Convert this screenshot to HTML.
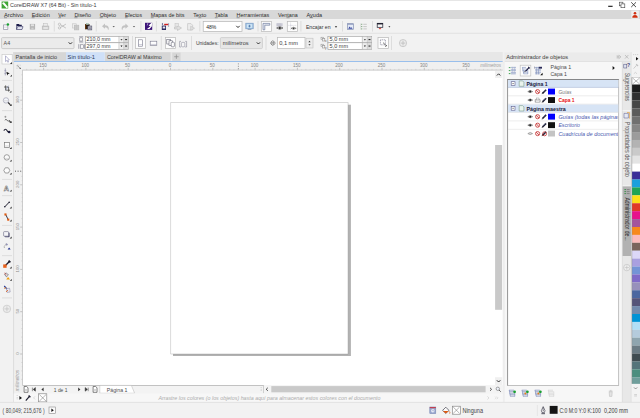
<!DOCTYPE html>
<html lang="es">
<head>
<meta charset="utf-8">
<title>CorelDRAW X7 (64 Bit) - Sin título-1</title>
<style>
html,body{margin:0;padding:0;background:#f0f0f0;overflow:hidden;}
body{width:640px;height:418px;position:relative;}
svg{position:absolute;left:0;top:0;display:block;font-family:"Liberation Sans",sans-serif;}
text{white-space:pre;}
</style>
</head>
<body>
<svg width="640" height="418" viewBox="0 0 640 418">
<g id="backgrounds" >
<rect x="0" y="0" width="640" height="418" fill="#f2f2f2" />
<rect x="0" y="0" width="640" height="10" fill="#ffffff" />
<rect x="0" y="0" width="640" height="0.7" fill="#dcdcdc" />
<rect x="0" y="10" width="640" height="9" fill="#d8d8d8" />
<line x1="0" y1="33.3" x2="640" y2="33.3" stroke="#dedede" stroke-width="0.8" />
</g>
<g id="titlebar" >
<rect x="1.6" y="1.5" width="6.6" height="7" fill="#3fa535" />
<path d="M2.3 2.2 L4 2.2 L7.6 6.6 L7.6 7.9 L6.4 7.9 L2.3 3.6 Z" fill="#ffffff" />
<path d="M2.3 2.2 L3.3 2.2 L2.3 3.2 Z" fill="#2a7a24" />
<text x="10" y="7.4" font-size="6.1" fill="#3a3a3a" textLength="86.5" lengthAdjust="spacingAndGlyphs" >CorelDRAW X7 (64 Bit) - Sin título-1</text>
<line x1="608.2" y1="6.3" x2="612.6" y2="6.3" stroke="#111" stroke-width="1.1" />
<rect x="619.3" y="2.2" width="3.6" height="3.6" fill="none" stroke="#444" stroke-width="0.6" />
<rect x="621" y="3.9" width="3.8" height="3.8" fill="#fff" stroke="#444" stroke-width="0.6" />
<path d="M631.2 2.3 L636 7.1 M636 2.3 L631.2 7.1" fill="none" stroke="#222" stroke-width="0.8" />
</g>
<g id="menubar" >
<text x="4" y="16.6" font-size="6.2" fill="#2c2c2c" textLength="19.1" lengthAdjust="spacingAndGlyphs" >Archivo</text>
<line x1="4" y1="17.7" x2="7.00143" y2="17.7" stroke="#555" stroke-width="0.5" />
<text x="31.7" y="16.6" font-size="6.2" fill="#2c2c2c" textLength="18" lengthAdjust="spacingAndGlyphs" >Edición</text>
<line x1="31.7" y1="17.7" x2="34.5286" y2="17.7" stroke="#555" stroke-width="0.5" />
<text x="58.3" y="16.6" font-size="6.2" fill="#2c2c2c" textLength="7.5" lengthAdjust="spacingAndGlyphs" >Ver</text>
<line x1="58.3" y1="17.7" x2="61.05" y2="17.7" stroke="#555" stroke-width="0.5" />
<text x="74.4" y="16.6" font-size="6.2" fill="#2c2c2c" textLength="16.6" lengthAdjust="spacingAndGlyphs" >Diseño</text>
<line x1="74.4" y1="17.7" x2="77.4433" y2="17.7" stroke="#555" stroke-width="0.5" />
<text x="99.7" y="16.6" font-size="6.2" fill="#2c2c2c" textLength="16.3" lengthAdjust="spacingAndGlyphs" >Objeto</text>
<line x1="99.7" y1="17.7" x2="102.688" y2="17.7" stroke="#555" stroke-width="0.5" />
<text x="124.9" y="16.6" font-size="6.2" fill="#2c2c2c" textLength="17.1" lengthAdjust="spacingAndGlyphs" >Efectos</text>
<line x1="124.9" y1="17.7" x2="127.587" y2="17.7" stroke="#555" stroke-width="0.5" />
<text x="150.8" y="16.6" font-size="6.2" fill="#2c2c2c" textLength="33.6" lengthAdjust="spacingAndGlyphs" >Mapas de bits</text>
<line x1="150.8" y1="17.7" x2="153.643" y2="17.7" stroke="#555" stroke-width="0.5" />
<text x="193.2" y="16.6" font-size="6.2" fill="#2c2c2c" textLength="13" lengthAdjust="spacingAndGlyphs" >Texto</text>
<line x1="198.4" y1="17.7" x2="201.26" y2="17.7" stroke="#555" stroke-width="0.5" />
<text x="214.8" y="16.6" font-size="6.2" fill="#2c2c2c" textLength="13" lengthAdjust="spacingAndGlyphs" >Tabla</text>
<line x1="214.8" y1="17.7" x2="217.66" y2="17.7" stroke="#555" stroke-width="0.5" />
<text x="236.6" y="16.6" font-size="6.2" fill="#2c2c2c" textLength="32.7" lengthAdjust="spacingAndGlyphs" >Herramientas</text>
<line x1="236.6" y1="17.7" x2="239.597" y2="17.7" stroke="#555" stroke-width="0.5" />
<text x="278.1" y="16.6" font-size="6.2" fill="#2c2c2c" textLength="19.6" lengthAdjust="spacingAndGlyphs" >Ventana</text>
<line x1="286.5" y1="17.7" x2="289.58" y2="17.7" stroke="#555" stroke-width="0.5" />
<text x="306.5" y="16.6" font-size="6.2" fill="#2c2c2c" textLength="15.5" lengthAdjust="spacingAndGlyphs" >Ayuda</text>
<line x1="309.6" y1="17.7" x2="313.01" y2="17.7" stroke="#555" stroke-width="0.5" />
<rect x="631.3" y="10.6" width="7.5" height="8" fill="#efefef" />
<circle cx="635" cy="13.2" r="1.3" fill="#d03010" />
<path d="M632.3 17.8 Q632.3 15 635 15 Q637.7 15 637.7 17.8 Z" fill="#d03010" />
</g>
<g id="toolbar" >
<path d="M3.5 24.8 L6.4 24.8 L7.8 26.2 L7.8 29.5 L3.5 29.5 Z" fill="#fbfbfb" stroke="#7c7c94" stroke-width="0.6" />
<path d="M3.8 27.2 H7.6" fill="none" stroke="#b8b8c8" stroke-width="0.5" />
<circle cx="7.9" cy="24.4" r="1.25" fill="#18a030" />
<path d="M16.4 24 L19 24 L19.6 24.7 L21.8 24.7 L21.8 26 L16.4 26 Z" fill="#1a1a48" />
<path d="M16.5 25.8 V29.5 H22 L23 26.6 H17.6 L16.6 29.3" fill="#e4e6f2" stroke="#2c2c5c" stroke-width="0.6" />
<rect x="29.8" y="23.9" width="5.3" height="5.7" fill="#b6b6b6" />
<rect x="30.9" y="24.3" width="3.1" height="1.9" fill="#e2e2e2" />
<rect x="31.3" y="27.6" width="2.3" height="2" fill="#d0d0d0" />
<rect x="42.2" y="26" width="6.7" height="3.6" fill="#cdcdcd" stroke="#b4b4b4" stroke-width="0.5" />
<rect x="43.7" y="23.6" width="3.7" height="2.4" fill="#ececec" stroke="#bcbcbc" stroke-width="0.5" />
<rect x="43.4" y="27.4" width="4.4" height="1.2" fill="#f4f4f4" />
<line x1="54.3" y1="21" x2="54.3" y2="31.5" stroke="#d4d4d4" stroke-width="0.7" />
<path d="M60.4 24.7 L65.9 28.1 M60.4 27.5 L65.9 24.1" fill="none" stroke="#b2b2b2" stroke-width="0.75" />
<circle cx="59.5" cy="24.3" r="1.15" fill="none" stroke="#b2b2b2" stroke-width="0.65" />
<circle cx="59.5" cy="27.9" r="1.15" fill="none" stroke="#b2b2b2" stroke-width="0.65" />
<rect x="72.3" y="23.8" width="3.9" height="4.2" fill="#efefef" stroke="#c4c4c4" stroke-width="0.6" />
<rect x="74.3" y="25.2" width="4.5" height="4.7" fill="#d0d0d0" stroke="#b8b8b8" stroke-width="0.6" />
<path d="M74.6 26.8 H78.6 M74.6 28.3 H78.6 M76.5 25.4 V29.8" fill="none" stroke="#bcbcbc" stroke-width="0.4" />
<rect x="85.1" y="24.2" width="4.5" height="5" fill="#1c120c" />
<rect x="85.1" y="24.2" width="1.3" height="5" fill="#6a3a10" />
<rect x="86.2" y="23.3" width="2.4" height="1.3" fill="#cfe6d8" stroke="#8aa89a" stroke-width="0.4" />
<rect x="87.9" y="26" width="3.9" height="3.9" fill="#b4b4c2" stroke="#55556a" stroke-width="0.6" />
<rect x="88.9" y="27.4" width="1.9" height="2.2" fill="#8c8c9c" />
<line x1="96.3" y1="21" x2="96.3" y2="31.5" stroke="#d4d4d4" stroke-width="0.7" />
<path d="M102 26.2 L105 23.6 L105 25.2 Q108.8 25.2 108.8 28.6 Q108.8 29.8 108 30.2 Q108 27.3 105 27.3 L105 28.8 Z" fill="#c2c2c2" />
<path d="M112.5 26.2 H114.9 L113.7 27.3 Z" fill="#333" />
<path d="M128.4 26.2 L125.4 23.6 L125.4 25.2 Q121.6 25.2 121.6 28.6 Q121.6 29.8 122.4 30.2 Q122.4 27.3 125.4 27.3 L125.4 28.8 Z" fill="#c2c2c2" />
<path d="M132.8 26.2 H135.2 L134 27.3 Z" fill="#333" />
<line x1="140.9" y1="21" x2="140.9" y2="31.5" stroke="#d4d4d4" stroke-width="0.7" />
<rect x="145" y="22.8" width="7.2" height="7.1" fill="#3c1478" />
<path d="M151.6 22.8 L148.6 25.6 L150.4 26.2 L147 29 L149.4 29 L151.8 26.4 L152.2 22.8 Z" fill="#ffffff" />
<path d="M147.8 23.2 L147.2 25.4" fill="none" stroke="#e8e0f8" stroke-width="0.6" />
<line x1="156.4" y1="21" x2="156.4" y2="31.5" stroke="#d4d4d4" stroke-width="0.7" />
<rect x="161.8" y="25.6" width="4.2" height="4.4" fill="#2a2a60" />
<rect x="162.7" y="26.5" width="2.5" height="2" fill="#e8e8f4" />
<rect x="164.2" y="23.8" width="4.2" height="1.4" fill="#d02020" />
<path d="M168.6 23 L168.6 27" fill="none" stroke="#8080a0" stroke-width="0.6" />
<path d="M161.6 24 L163 22.8 L163 25.2 Z" fill="#5a5a8a" />
<path d="M174.5 27 L177.5 27 L177.5 25.5 L181.5 28 L177.5 30.5 L177.5 29 L174.5 29 Z" fill="#e0e0e0" stroke="#bbbbbb" stroke-width="0.6" />
<rect x="175" y="23.4" width="3.6" height="2.8" fill="#e6e6e6" stroke="#c0c0c0" stroke-width="0.5" />
<path d="M187.6 23.6 L191 23.6 L192.6 25.2 L192.6 30 L187.6 30 Z" fill="#ececec" stroke="#bcbcbc" stroke-width="0.6" />
<path d="M190.6 26.2 L194.6 28.2 L190.6 30.2 Z" fill="#e0e0e0" stroke="#bcbcbc" stroke-width="0.5" />
<line x1="199.8" y1="21" x2="199.8" y2="31.5" stroke="#d4d4d4" stroke-width="0.7" />
<rect x="203.2" y="21.6" width="38.8" height="9.8" fill="#ffffff" stroke="#b4b4b4" stroke-width="0.7" />
<text x="206.2" y="28.7" font-size="6.2" fill="#262626" textLength="10.1" lengthAdjust="spacingAndGlyphs" >48%</text>
<path d="M236.3 25.85 L238 27.55 L239.7 25.85" fill="none" stroke="#222" stroke-width="0.95" />
<rect x="245.8" y="23.2" width="7.4" height="5.6" fill="#a4c4e4" stroke="#7094c0" stroke-width="0.6" />
<rect x="246.9" y="24.2" width="5.2" height="3.6" fill="#d0e6f6" />
<path d="M249.5 24.8 L249.5 27.4 M248.2 26.1 L250.8 26.1" fill="none" stroke="#2a5a9a" stroke-width="0.6" />
<rect x="247.6" y="29.2" width="3.8" height="0.8" fill="#8a9ab0" />
<line x1="258" y1="21" x2="258" y2="31.5" stroke="#d4d4d4" stroke-width="0.7" />
<rect x="261.3" y="21.6" width="10.2" height="9.8" fill="#fdfdfd" stroke="#b8b8b8" stroke-width="0.7" />
<path d="M263 23.4 L269.8 23.4 L269.8 25.2 L264.8 25.2 L264.8 29.8 L263 29.8 Z" fill="#e8ecf4" stroke="#5a6a90" stroke-width="0.6" />
<rect x="276.4" y="23" width="6.2" height="3.6" fill="#d8d8e0" />
<path d="M276.4 24.2 H282.6 M276.4 25.4 H282.6 M278 23 V26.6 M280 23 V26.6" fill="none" stroke="#b0b0c0" stroke-width="0.4" />
<path d="M276.6 28 Q279.8 25.2 283 28 Q279.8 30.8 276.6 28 Z" fill="#f4f4f4" stroke="#333" stroke-width="0.6" />
<circle cx="279.8" cy="28" r="1.1" fill="#222" />
<rect x="287.3" y="21.6" width="10.2" height="9.8" fill="#fdfdfd" stroke="#b8b8b8" stroke-width="0.7" />
<path d="M290.6 22.6 V30.4 M288.4 25.4 H296.4" fill="none" stroke="#b4b4c4" stroke-width="0.5" stroke-dasharray="0.8 0.5"/>
<path d="M291 28.3 Q293.6 26.2 296.2 28.3 Q293.6 30.4 291 28.3 Z" fill="#f4f4f4" stroke="#444" stroke-width="0.5" />
<circle cx="293.6" cy="28.3" r="0.9" fill="#333" />
<line x1="300.9" y1="21" x2="300.9" y2="31.5" stroke="#d4d4d4" stroke-width="0.7" />
<text x="305.9" y="28.7" font-size="6.1" fill="#333" textLength="24.7" lengthAdjust="spacingAndGlyphs" >Encajar en</text>
<path d="M334.8 26.14 L337.2 26.14 L336 27.7 Z" fill="#222" />
<line x1="342.5" y1="21" x2="342.5" y2="31.5" stroke="#d4d4d4" stroke-width="0.7" />
<rect x="347.4" y="23.7" width="6" height="5.8" fill="#e4eaf6" stroke="#7582a8" stroke-width="0.6" />
<rect x="347.4" y="23.7" width="6" height="1" fill="#8c98bc" />
<path d="M348.2 28.8 L349.6 26.4 L350.8 28 L351.6 27.2 L352.6 28.8 Z" fill="#3a4aa0" />
<path d="M361 24.3 H362.3 M361 26.6 H362.3 M361 28.9 H362.3" fill="none" stroke="#7aa47a" stroke-width="0.9" />
<path d="M363.3 24.3 H366.8 M363.3 26.6 H366.8 M363.3 28.9 H366.8" fill="none" stroke="#b6b6b6" stroke-width="0.7" />
<path d="M360.6 23.4 V29.8" fill="none" stroke="#c0c8c0" stroke-width="0.4" />
<line x1="372.5" y1="21" x2="372.5" y2="31.5" stroke="#d4d4d4" stroke-width="0.7" />
<rect x="377.2" y="23.3" width="5.6" height="4" fill="#f6f6f6" stroke="#1a1a2a" stroke-width="0.7" />
<rect x="377.2" y="23.1" width="5.6" height="1.3" fill="#1a1a2a" />
<path d="M378.7 27.9 H381.3 L380 29.6 Z" fill="#e03020" />
<path d="M388.4 26.25 L390.4 26.25 L389.4 27.55 Z" fill="#222" />
</g>
<g id="propertybar" >
<rect x="1.6" y="37.6" width="72.4" height="11" fill="#ebebeb" stroke="#bdbdbd" stroke-width="0.7" rx="1" />
<text x="3.6" y="45.3" font-size="6.1" fill="#555" textLength="6.6" lengthAdjust="spacingAndGlyphs" >A4</text>
<path d="M68.7 42.35 L70.4 44.05 L72.1 42.35" fill="none" stroke="#222" stroke-width="0.95" />
<rect x="79.8" y="37.9" width="2.8" height="3.1" fill="#fafafa" stroke="#6a6a7a" stroke-width="0.5" />
<path d="M79.2 36.8 H83.2 M79.2 42 H83.2" fill="none" stroke="#6a6a7a" stroke-width="0.6" />
<rect x="80.4" y="44.8" width="3" height="3.4" fill="#fafafa" stroke="#6a6a7a" stroke-width="0.5" />
<path d="M78.8 44.2 V48.8 M84.6 44.2 V48.8" fill="none" stroke="#6a6a7a" stroke-width="0.6" />
<rect x="85.6" y="36.4" width="42.7" height="6.4" fill="#e2e2e2" stroke="#a4a4a4" stroke-width="0.6" />
<rect x="85.6" y="36.4" width="33.4" height="6.4" fill="#ffffff" stroke="#aaaaaa" stroke-width="0.6" />
<text x="86.6" y="41.3" font-size="6.1" fill="#3c3c3c" textLength="23.8" lengthAdjust="spacingAndGlyphs" >210,0 mm</text>
<rect x="119.4" y="36.9" width="4.2" height="5.4" fill="#eeeeee" />
<path d="M120.5 39.15 L122.5 39.15 L121.5 40.45 Z" fill="#111" />
<line x1="123.9" y1="36.4" x2="123.9" y2="42.8" stroke="#a8a8a8" stroke-width="0.5" />
<rect x="124.2" y="36.9" width="3.8" height="5.4" fill="#dadada" />
<path d="M125.1 39.6 H127.1" fill="none" stroke="#222" stroke-width="1" />
<rect x="85.6" y="42.8" width="42.7" height="6.5" fill="#e2e2e2" stroke="#a4a4a4" stroke-width="0.6" />
<rect x="85.6" y="42.8" width="33.4" height="6.5" fill="#ffffff" stroke="#aaaaaa" stroke-width="0.6" />
<text x="86.6" y="47.8" font-size="6.1" fill="#3c3c3c" textLength="23.8" lengthAdjust="spacingAndGlyphs" >297,0 mm</text>
<rect x="119.4" y="43.3" width="4.2" height="5.5" fill="#eeeeee" />
<path d="M120.5 45.6 L122.5 45.6 L121.5 46.9 Z" fill="#111" />
<line x1="123.9" y1="42.8" x2="123.9" y2="49.3" stroke="#a8a8a8" stroke-width="0.5" />
<rect x="124.2" y="43.3" width="3.8" height="5.5" fill="#dadada" />
<path d="M125.1 46.05 H127.1" fill="none" stroke="#222" stroke-width="1" />
<line x1="132.5" y1="36" x2="132.5" y2="50" stroke="#d4d4d4" stroke-width="0.7" />
<rect x="135.5" y="37.6" width="10.1" height="11" fill="#fdfdfd" stroke="#b8b8b8" stroke-width="0.7" />
<rect x="138.4" y="39.8" width="4.2" height="6.4" fill="#ffffff" stroke="#77778a" stroke-width="0.6" />
<path d="M138.4 44.6 H142.6" fill="none" stroke="#9a9ab0" stroke-width="0.5" />
<rect x="150.2" y="41.2" width="6.6" height="4.4" fill="#ffffff" stroke="#77778a" stroke-width="0.6" />
<path d="M150.2 44.4 H156.8" fill="none" stroke="#9a9ab0" stroke-width="0.5" />
<line x1="161.3" y1="36" x2="161.3" y2="50" stroke="#d4d4d4" stroke-width="0.7" />
<rect x="165.4" y="37.6" width="10.2" height="11" fill="#fdfdfd" stroke="#b8b8b8" stroke-width="0.7" />
<rect x="166.8" y="39.4" width="3.6" height="4.6" fill="#ffffff" stroke="#555566" stroke-width="0.55" />
<rect x="169" y="40.8" width="3.6" height="4.6" fill="#ffffff" stroke="#555566" stroke-width="0.55" />
<rect x="171.2" y="42.2" width="3.2" height="4.6" fill="#ffffff" stroke="#555566" stroke-width="0.55" rx="0.8" />
<path d="M179.6 41.4 V47 M186.6 41.4 V47 M179.6 41.4 H181 M186.6 41.4 H185.2 M179.6 47 H181 M186.6 47 H185.2" fill="none" stroke="#8a8a9a" stroke-width="0.6" />
<rect x="181.4" y="42.4" width="3.4" height="4.4" fill="#f6f6f6" stroke="#8a8a9a" stroke-width="0.55" rx="0.8" />
<line x1="191.5" y1="36" x2="191.5" y2="50" stroke="#d4d4d4" stroke-width="0.7" />
<text x="195.9" y="45.3" font-size="6.1" fill="#3c3c3c" textLength="22.7" lengthAdjust="spacingAndGlyphs" >Unidades:</text>
<rect x="220.4" y="37.6" width="42" height="11" fill="#e6e6e6" stroke="#c6c6c6" stroke-width="0.7" rx="1" />
<text x="222.8" y="45.3" font-size="6.1" fill="#3c3c3c" textLength="25.8" lengthAdjust="spacingAndGlyphs" >milímetros</text>
<path d="M256.8 42.4 L258.4 44 L260 42.4" fill="none" stroke="#222" stroke-width="0.95" />
<line x1="266" y1="36" x2="266" y2="50" stroke="#d4d4d4" stroke-width="0.7" />
<path d="M272.8 40.4 L274.2 42 H273.3 V42.6 H273.9 V41.8 L275.5 43.1 L273.9 44.4 V43.6 H273.3 V44.2 H274.2 L272.8 45.8 L271.4 44.2 H272.3 V43.6 H271.7 V44.4 L270.1 43.1 L271.7 41.8 V42.6 H272.3 V42 H271.4 Z" fill="#f2f2f2" stroke="#666" stroke-width="0.5" />
<rect x="277.6" y="37.6" width="27.4" height="11" fill="#ffffff" stroke="#b8b8b8" stroke-width="0.7" />
<text x="279.2" y="45.3" font-size="6.1" fill="#3c3c3c" textLength="18.8" lengthAdjust="spacingAndGlyphs" >0,1 mm</text>
<rect x="306" y="38.2" width="7" height="9.8" fill="#ececec" stroke="#c0c0c0" stroke-width="0.6" />
<path d="M308.4 42.2 L309.5 40.8 L310.6 42.2 Z" fill="#333" />
<path d="M308.4 44.2 L309.5 45.6 L310.6 44.2 Z" fill="#333" />
<rect x="321" y="37.2" width="2.4" height="2.4" fill="#f4f4f4" stroke="#888" stroke-width="0.5" />
<rect x="322.4" y="38.6" width="2.4" height="2.4" fill="#f4f4f4" stroke="#888" stroke-width="0.5" />
<text x="325" y="42" font-size="3" fill="#555" >x</text>
<rect x="321" y="44.2" width="2.4" height="2.4" fill="#f4f4f4" stroke="#888" stroke-width="0.5" />
<rect x="322.4" y="45.6" width="2.4" height="2.4" fill="#f4f4f4" stroke="#888" stroke-width="0.5" />
<text x="325" y="49" font-size="3" fill="#555" >y</text>
<rect x="328" y="36.4" width="43.7" height="6.4" fill="#e2e2e2" stroke="#a4a4a4" stroke-width="0.6" />
<rect x="328" y="36.4" width="34.2" height="6.4" fill="#ffffff" stroke="#aaaaaa" stroke-width="0.6" />
<text x="329.6" y="41.3" font-size="6.1" fill="#3c3c3c" textLength="18.4" lengthAdjust="spacingAndGlyphs" >5,0 mm</text>
<rect x="362.8" y="36.9" width="4.2" height="5.4" fill="#eeeeee" />
<path d="M363.9 39.15 L365.9 39.15 L364.9 40.45 Z" fill="#111" />
<line x1="367.3" y1="36.4" x2="367.3" y2="42.8" stroke="#a8a8a8" stroke-width="0.5" />
<rect x="367.6" y="36.9" width="3.8" height="5.4" fill="#dadada" />
<path d="M368.5 39.6 H370.5" fill="none" stroke="#222" stroke-width="1" />
<rect x="328" y="42.8" width="43.7" height="6.5" fill="#e2e2e2" stroke="#a4a4a4" stroke-width="0.6" />
<rect x="328" y="42.8" width="34.2" height="6.5" fill="#ffffff" stroke="#aaaaaa" stroke-width="0.6" />
<text x="329.6" y="47.8" font-size="6.1" fill="#3c3c3c" textLength="18.4" lengthAdjust="spacingAndGlyphs" >5,0 mm</text>
<rect x="362.8" y="43.3" width="4.2" height="5.5" fill="#eeeeee" />
<path d="M363.9 45.6 L365.9 45.6 L364.9 46.9 Z" fill="#111" />
<line x1="367.3" y1="42.8" x2="367.3" y2="49.3" stroke="#a8a8a8" stroke-width="0.5" />
<rect x="367.6" y="43.3" width="3.8" height="5.5" fill="#dadada" />
<path d="M368.5 46.05 H370.5" fill="none" stroke="#222" stroke-width="1" />
<rect x="378" y="37.6" width="10.6" height="11" fill="#fdfdfd" stroke="#b8b8b8" stroke-width="0.7" />
<rect x="380.4" y="39.8" width="5" height="5" fill="none" stroke="#606078" stroke-width="0.6" stroke-dasharray="1 0.7"/>
<path d="M383 42.6 L386.6 46 M385.2 46.8 L387 45" fill="none" stroke="#444" stroke-width="0.7" />
<line x1="391.5" y1="36" x2="391.5" y2="50" stroke="#d4d4d4" stroke-width="0.7" />
<circle cx="403" cy="43.1" r="3.6" fill="#ececec" stroke="#bcbcbc" stroke-width="0.7" />
<path d="M400.6 43.1 H405.4 M403 40.7 V45.5" fill="none" stroke="#bcbcbc" stroke-width="0.8" />
</g>
<g id="doctabs" >
<rect x="13.8" y="52" width="489" height="9.6" fill="#e7e7e7" />
<rect x="14.2" y="52.2" width="51.8" height="9" fill="#d6d6d6" />
<text x="15.6" y="58.9" font-size="5.9" fill="#3a3a3a" textLength="41.4" lengthAdjust="spacingAndGlyphs" >Pantalla de inicio</text>
<rect x="66" y="52.2" width="38.6" height="9.4" fill="#cfe0f8" />
<text x="67.6" y="58.9" font-size="5.9" fill="#2a3a5a" textLength="27.4" lengthAdjust="spacingAndGlyphs" >Sin título-1</text>
<rect x="105" y="52.2" width="65.6" height="9" fill="#d6d6d6" />
<text x="106.9" y="58.9" font-size="5.9" fill="#3a3a3a" textLength="54.9" lengthAdjust="spacingAndGlyphs" >CorelDRAW al Máximo</text>
<rect x="172.2" y="52.6" width="8.4" height="8.4" fill="#d6d6d6" />
<path d="M174.2 56.7 H178.6 M176.4 54.5 V58.9" fill="none" stroke="#8c8c8c" stroke-width="0.7" />
<line x1="13.8" y1="61.5" x2="502.8" y2="61.5" stroke="#90baec" stroke-width="0.9" />
</g>
<g id="canvas" >
<rect x="22.6" y="70.2" width="480.2" height="315.2" fill="#ffffff" />
<rect x="13.8" y="62" width="489" height="8.2" fill="#f0f0f0" />
<rect x="13.8" y="62" width="8.8" height="331.4" fill="#f0f0f0" />
<line x1="13.6" y1="52" x2="13.6" y2="402.4" stroke="#d2d2d2" stroke-width="0.7" />
<path d="M26.68 68.9 V70.2 M30.91 69.4 V70.2 M35.14 68.9 V70.2 M39.37 69.4 V70.2 M47.83 69.4 V70.2 M52.06 68.9 V70.2 M56.29 69.4 V70.2 M60.52 68.9 V70.2 M64.75 69.4 V70.2 M68.98 68.9 V70.2 M73.21 69.4 V70.2 M77.44 68.9 V70.2 M81.67 69.4 V70.2 M90.13 69.4 V70.2 M94.36 68.9 V70.2 M98.59 69.4 V70.2 M102.82 68.9 V70.2 M107.05 69.4 V70.2 M111.28 68.9 V70.2 M115.51 69.4 V70.2 M119.74 68.9 V70.2 M123.97 69.4 V70.2 M132.43 69.4 V70.2 M136.66 68.9 V70.2 M140.89 69.4 V70.2 M145.12 68.9 V70.2 M149.35 69.4 V70.2 M153.58 68.9 V70.2 M157.81 69.4 V70.2 M162.04 68.9 V70.2 M166.27 69.4 V70.2 M174.73 69.4 V70.2 M178.96 68.9 V70.2 M183.19 69.4 V70.2 M187.42 68.9 V70.2 M191.65 69.4 V70.2 M195.88 68.9 V70.2 M200.11 69.4 V70.2 M204.34 68.9 V70.2 M208.57 69.4 V70.2 M217.03 69.4 V70.2 M221.26 68.9 V70.2 M225.49 69.4 V70.2 M229.72 68.9 V70.2 M233.95 69.4 V70.2 M238.18 68.9 V70.2 M242.41 69.4 V70.2 M246.64 68.9 V70.2 M250.87 69.4 V70.2 M259.33 69.4 V70.2 M263.56 68.9 V70.2 M267.79 69.4 V70.2 M272.02 68.9 V70.2 M276.25 69.4 V70.2 M280.48 68.9 V70.2 M284.71 69.4 V70.2 M288.94 68.9 V70.2 M293.17 69.4 V70.2 M301.63 69.4 V70.2 M305.86 68.9 V70.2 M310.09 69.4 V70.2 M314.32 68.9 V70.2 M318.55 69.4 V70.2 M322.78 68.9 V70.2 M327.01 69.4 V70.2 M331.24 68.9 V70.2 M335.47 69.4 V70.2 M343.93 69.4 V70.2 M348.16 68.9 V70.2 M352.39 69.4 V70.2 M356.62 68.9 V70.2 M360.85 69.4 V70.2 M365.08 68.9 V70.2 M369.31 69.4 V70.2 M373.54 68.9 V70.2 M377.77 69.4 V70.2 M386.23 69.4 V70.2 M390.46 68.9 V70.2 M394.69 69.4 V70.2 M398.92 68.9 V70.2 M403.15 69.4 V70.2 M407.38 68.9 V70.2 M411.61 69.4 V70.2 M415.84 68.9 V70.2 M420.07 69.4 V70.2 M428.53 69.4 V70.2 M432.76 68.9 V70.2 M436.99 69.4 V70.2 M441.22 68.9 V70.2 M445.45 69.4 V70.2 M449.68 68.9 V70.2 M453.91 69.4 V70.2 M458.14 68.9 V70.2 M462.37 69.4 V70.2 M470.83 69.4 V70.2 M475.06 68.9 V70.2 M479.29 69.4 V70.2 M483.52 68.9 V70.2 M487.75 69.4 V70.2 M491.98 68.9 V70.2 M496.21 69.4 V70.2 M500.44 68.9 V70.2" fill="none" stroke="#c6c6c6" stroke-width="0.6" />
<path d="M43.60 67.8 V70.2 M85.90 67.8 V70.2 M128.20 67.8 V70.2 M170.50 67.8 V70.2 M212.80 67.8 V70.2 M255.10 67.8 V70.2 M297.40 67.8 V70.2 M339.70 67.8 V70.2 M382.00 67.8 V70.2 M424.30 67.8 V70.2 M466.60 67.8 V70.2" fill="none" stroke="#a2a2a2" stroke-width="0.6" />
<line x1="22.2" y1="70.1" x2="502.8" y2="70.1" stroke="#c2c2c2" stroke-width="0.8" />
<text x="43" y="67.2" font-size="4.5" fill="#858585" text-anchor="middle" >150</text>
<text x="85.3" y="67.2" font-size="4.5" fill="#858585" text-anchor="middle" >100</text>
<text x="127.6" y="67.2" font-size="4.5" fill="#858585" text-anchor="middle" >50</text>
<text x="169.9" y="67.2" font-size="4.5" fill="#858585" text-anchor="middle" >0</text>
<text x="212.2" y="67.2" font-size="4.5" fill="#858585" text-anchor="middle" >50</text>
<text x="254.5" y="67.2" font-size="4.5" fill="#858585" text-anchor="middle" >100</text>
<text x="296.8" y="67.2" font-size="4.5" fill="#858585" text-anchor="middle" >150</text>
<text x="339.1" y="67.2" font-size="4.5" fill="#858585" text-anchor="middle" >200</text>
<text x="381.4" y="67.2" font-size="4.5" fill="#858585" text-anchor="middle" >250</text>
<text x="423.7" y="67.2" font-size="4.5" fill="#858585" text-anchor="middle" >300</text>
<text x="466" y="67.2" font-size="4.5" fill="#858585" text-anchor="middle" >350</text>
<text x="480.2" y="67.4" font-size="4.6" fill="#9a9a9a" textLength="20.8" lengthAdjust="spacingAndGlyphs" font-style="italic" >milímetros</text>
<path d="M17 65.2 H21 M17 65.2 V69" fill="none" stroke="#aaaaaa" stroke-width="0.5" stroke-dasharray="0.8 0.6"/>
<path d="M17.4 65.6 L20.2 68.4" fill="none" stroke="#555" stroke-width="0.6" />
<path d="M20.8 69 L20.6 67.4 L19.2 68.8 Z" fill="#444" />
<path d="M21.3 379.38 H22.6 M21.8 375.15 H22.6 M21.3 370.92 H22.6 M21.8 366.69 H22.6 M21.3 362.46 H22.6 M21.8 358.23 H22.6 M21.8 349.77 H22.6 M21.3 345.54 H22.6 M21.8 341.31 H22.6 M21.3 337.08 H22.6 M21.8 332.85 H22.6 M21.3 328.62 H22.6 M21.8 324.39 H22.6 M21.3 320.16 H22.6 M21.8 315.93 H22.6 M21.8 307.47 H22.6 M21.3 303.24 H22.6 M21.8 299.01 H22.6 M21.3 294.78 H22.6 M21.8 290.55 H22.6 M21.3 286.32 H22.6 M21.8 282.09 H22.6 M21.3 277.86 H22.6 M21.8 273.63 H22.6 M21.8 265.17 H22.6 M21.3 260.94 H22.6 M21.8 256.71 H22.6 M21.3 252.48 H22.6 M21.8 248.25 H22.6 M21.3 244.02 H22.6 M21.8 239.79 H22.6 M21.3 235.56 H22.6 M21.8 231.33 H22.6 M21.8 222.87 H22.6 M21.3 218.64 H22.6 M21.8 214.41 H22.6 M21.3 210.18 H22.6 M21.8 205.95 H22.6 M21.3 201.72 H22.6 M21.8 197.49 H22.6 M21.3 193.26 H22.6 M21.8 189.03 H22.6 M21.8 180.57 H22.6 M21.3 176.34 H22.6 M21.8 172.11 H22.6 M21.3 167.88 H22.6 M21.8 163.65 H22.6 M21.3 159.42 H22.6 M21.8 155.19 H22.6 M21.3 150.96 H22.6 M21.8 146.73 H22.6 M21.8 138.27 H22.6 M21.3 134.04 H22.6 M21.8 129.81 H22.6 M21.3 125.58 H22.6 M21.8 121.35 H22.6 M21.3 117.12 H22.6 M21.8 112.89 H22.6 M21.3 108.66 H22.6 M21.8 104.43 H22.6 M21.8 95.97 H22.6 M21.3 91.74 H22.6 M21.8 87.51 H22.6 M21.3 83.28 H22.6 M21.8 79.05 H22.6 M21.3 74.82 H22.6" fill="none" stroke="#c6c6c6" stroke-width="0.6" />
<path d="M20.2 354.00 H22.6 M20.2 311.70 H22.6 M20.2 269.40 H22.6 M20.2 227.10 H22.6 M20.2 184.80 H22.6 M20.2 142.50 H22.6 M20.2 100.20 H22.6" fill="none" stroke="#a2a2a2" stroke-width="0.6" />
<line x1="22.5" y1="70.1" x2="22.5" y2="385.4" stroke="#c2c2c2" stroke-width="0.8" />
<text transform="translate(19.0 99.70) rotate(-90)" font-size="4.3" fill="#8c8c8c" text-anchor="middle">300</text>
<text transform="translate(19.0 142.00) rotate(-90)" font-size="4.3" fill="#8c8c8c" text-anchor="middle">250</text>
<text transform="translate(19.0 184.30) rotate(-90)" font-size="4.3" fill="#8c8c8c" text-anchor="middle">200</text>
<text transform="translate(19.0 226.60) rotate(-90)" font-size="4.3" fill="#8c8c8c" text-anchor="middle">150</text>
<text transform="translate(19.0 268.90) rotate(-90)" font-size="4.3" fill="#8c8c8c" text-anchor="middle">100</text>
<text transform="translate(19.0 311.20) rotate(-90)" font-size="4.3" fill="#8c8c8c" text-anchor="middle">50</text>
<text transform="translate(19.0 353.50) rotate(-90)" font-size="4.3" fill="#8c8c8c" text-anchor="middle">0</text>
<text transform="translate(19.3 391.2) rotate(-90)" font-size="4.5" fill="#9a9a9a" font-style="italic" textLength="21.2" lengthAdjust="spacingAndGlyphs">milímetros</text>
<path d="M15 171.2 H21.4" fill="none" stroke="#333" stroke-width="0.8" stroke-dasharray="1 1.6"/>
<path d="M238.4 63.4 V69.4" fill="none" stroke="#6a6a6a" stroke-width="0.7" stroke-dasharray="1 1.4"/>
<rect x="173" y="104.7" width="177.9" height="251.3" fill="#b2b2b2" />
<rect x="170.6" y="102.5" width="177.5" height="251.5" fill="#ffffff" />
<path d="M348.1 104.7 V102.5 H170.6 V354 H173" fill="none" stroke="#d0d0d0" stroke-width="0.8" />
<path d="M348.2 104.7 V354.2 H173" fill="none" stroke="#a4a4a4" stroke-width="0.7" />
<rect x="495" y="71" width="7.2" height="7" fill="#f0f0f0" />
<path d="M496.9 75.5 L498.6 73.8 L500.3 75.5" fill="none" stroke="#2a2a2a" stroke-width="1" />
<rect x="495.1" y="145" width="7" height="164.8" fill="#c9c9c9" />
<rect x="495" y="377.2" width="7.2" height="8" fill="#f0f0f0" />
<path d="M496.9 380.3 L498.6 382 L500.3 380.3" fill="none" stroke="#2a2a2a" stroke-width="1" />
</g>
<g id="toolbox" >
<rect x="2" y="54.4" width="10.2" height="9.6" fill="#ffffff" stroke="#c4c4c4" stroke-width="0.6" />
<path d="M5.5 55.8 L5.5 61.6 L6.9 60.4 L7.8 62.3 L8.6 61.9 L7.7 60.1 L9.3 59.8 Z" fill="#ffffff" stroke="#8080ac" stroke-width="0.55" />
<path d="M11.9 62.1 V64 H10 Z" fill="#222" />
<path d="M5.3 68.4 V75.4" fill="none" stroke="#7a7a9a" stroke-width="0.6" />
<path d="M4.3 70.6 H6.3 M4.3 73.4 H6.3" fill="none" stroke="#8a8aa8" stroke-width="0.5" />
<path d="M6.4 71.8 L9.8 73.6 L8 74 L7.2 75.6 Z" fill="#111" />
<path d="M11.9 74.7 V76.6 H10 Z" fill="#222" />
<line x1="2" y1="80.4" x2="12" y2="80.4" stroke="#d6d6d6" stroke-width="0.7" />
<path d="M5.6 85.4 V90.2 H10 M4 87 H8.6 V91.6" fill="none" stroke="#3a3a3a" stroke-width="0.7" />
<path d="M8.6 85.6 L5.6 90.2" fill="none" stroke="#6a7aa8" stroke-width="0.5" />
<path d="M11.4 90.7 V92.6 H9.5 Z" fill="#222" />
<circle cx="6" cy="100.4" r="2.7" fill="#f4f6fb" stroke="#9a9aac" stroke-width="0.65" />
<path d="M4 100.8 H8" fill="none" stroke="#bbb" stroke-width="0.5" />
<path d="M8.1 102.5 L10.4 104.8" fill="none" stroke="#2a2a2a" stroke-width="1.15" />
<path d="M11.6 104.1 V106 H9.7 Z" fill="#222" />
<line x1="2" y1="110.6" x2="12" y2="110.6" stroke="#d6d6d6" stroke-width="0.7" />
<path d="M4.4 116.8 H6.4 M5.4 115.8 V117.8" fill="none" stroke="#666" stroke-width="0.5" />
<path d="M4.8 120.2 Q6 118.4 7 120.2 Q8 122 9.4 120.6" fill="none" stroke="#333" stroke-width="0.7" />
<path d="M9 120 L11 121.6 L9.6 122.6 Z" fill="#222" />
<path d="M11.6 121.1 V123 H9.7 Z" fill="#222" />
<path d="M3.8 130.6 Q5.6 128 7 130.6 Q8 132.8 9.6 131.4" fill="none" stroke="#223" stroke-width="1.1" />
<circle cx="9.2" cy="132" r="1.3" fill="#1a1a3a" />
<rect x="4.4" y="142.4" width="5.2" height="5.2" fill="#fbfbfb" stroke="#7a7a7a" stroke-width="0.7" />
<path d="M4.4 146 H9.6" fill="none" stroke="#bbb" stroke-width="0.5" />
<path d="M11.6 147.1 V149 H9.7 Z" fill="#222" />
<circle cx="6.8" cy="157.4" r="2.7" fill="#fbfbfb" stroke="#7a7a7a" stroke-width="0.7" />
<path d="M4.6 158.4 H9" fill="none" stroke="#bbb" stroke-width="0.5" />
<path d="M11.6 159.7 V161.6 H9.7 Z" fill="#222" />
<path d="M5.2 167.8 H8.4 L9.8 170.4 L8.4 173 H5.2 L3.8 170.4 Z" fill="#fbfbfb" stroke="#7a7a7a" stroke-width="0.7" />
<path d="M11.6 172.7 V174.6 H9.7 Z" fill="#222" />
<line x1="2" y1="179.4" x2="12" y2="179.4" stroke="#d6d6d6" stroke-width="0.7" />
<text x="3.8" y="191" font-size="7.2" fill="#f4f4f4" font-weight="bold" stroke="#555" stroke-width="0.45">A</text>
<path d="M11.6 189.7 V191.6 H9.7 Z" fill="#222" />
<line x1="2" y1="195.6" x2="12" y2="195.6" stroke="#d6d6d6" stroke-width="0.7" />
<path d="M4.8 206.8 L9.2 202.2" fill="none" stroke="#223" stroke-width="1" />
<circle cx="4.8" cy="206.8" r="0.8" fill="#223" />
<circle cx="9.2" cy="202.2" r="0.8" fill="#223" />
<path d="M11.6 206.5 V208.4 H9.7 Z" fill="#222" />
<path d="M5.6 214.4 L8.2 219.6" fill="none" stroke="#223" stroke-width="0.9" />
<rect x="4.4" y="213.4" width="2.1" height="2.1" fill="#e05a10" />
<rect x="7.2" y="218.6" width="2.1" height="2.1" fill="#e05a10" />
<path d="M11.6 219.5 V221.4 H9.7 Z" fill="#222" />
<line x1="2" y1="225.4" x2="12" y2="225.4" stroke="#d6d6d6" stroke-width="0.7" />
<rect x="4.6" y="232.6" width="5" height="4.6" fill="#55557a" rx="0.8" />
<rect x="3.6" y="231.6" width="5" height="4.6" fill="#f4f4f8" stroke="#666680" stroke-width="0.6" rx="0.8" />
<path d="M11.6 236.5 V238.4 H9.7 Z" fill="#222" />
<path d="M4 246.8 L6.6 243.4" fill="none" stroke="#777" stroke-width="0.5" />
<path d="M5.6 243.4 L8 244 L6.8 246 Z" fill="#8a8ab0" />
<path d="M7.6 249.6 H10.6 L9.1 247.4 Z" fill="#1a2a8a" />
<path d="M3.8 247.4 l1.2 0" fill="none" stroke="#888" stroke-width="0.6" />
<line x1="2" y1="255.6" x2="12" y2="255.6" stroke="#d6d6d6" stroke-width="0.7" />
<path d="M5 266 L9.6 261.2" fill="none" stroke="#1a1a2a" stroke-width="1.3" />
<path d="M8.6 260.6 L10.4 262.4" fill="none" stroke="#1a1a2a" stroke-width="1.5" />
<rect x="3.2" y="264.4" width="3.4" height="3.4" fill="#e8601a" />
<path d="M11.6 266.5 V268.4 H9.7 Z" fill="#222" />
<path d="M4.6 274.4 L6.2 272.8 L8.4 275 L6.4 276.8 Z" fill="#f4f4f4" stroke="#445" stroke-width="0.6" />
<path d="M4.4 273 L6.6 275" fill="none" stroke="#c03020" stroke-width="0.7" />
<path d="M6.2 279.6 H10 L8.1 277 Z" fill="#f0a010" />
<path d="M11.8 278.9 V280.8 H9.9 Z" fill="#222" />
<path d="M4.2 286 L7 289" fill="none" stroke="#223a9a" stroke-width="1.1" />
<path d="M4.2 288.4 L6 287.6" fill="none" stroke="#e07010" stroke-width="0.9" />
<path d="M6.4 288.6 L9.6 288.2 L10.2 292 L7 292.4 Z" fill="#e8e8f0" stroke="#8080a0" stroke-width="0.5" />
<path d="M6 292 L8 290" fill="none" stroke="#e05a10" stroke-width="0.8" />
<line x1="2" y1="297.9" x2="12" y2="297.9" stroke="#d6d6d6" stroke-width="0.7" />
<circle cx="6.9" cy="308.9" r="3.7" fill="#ededed" stroke="#c4c4c4" stroke-width="0.7" />
<path d="M4.4 308.9 H9.4 M6.9 306.4 V311.4" fill="none" stroke="#c4c4c4" stroke-width="0.8" />
</g>
<g id="docker" >
<rect x="502.8" y="52" width="137.2" height="350.4" fill="#f1f1f1" />
<line x1="504.2" y1="62" x2="504.2" y2="402.4" stroke="#e2e2e2" stroke-width="0.6" />
<rect x="504.6" y="52.4" width="126.6" height="9" fill="#ebebeb" />
<text x="506.2" y="58.9" font-size="5.9" fill="#3a3a3a" textLength="62" lengthAdjust="spacingAndGlyphs" >Administrador de objetos</text>
<path d="M617.2 55.2 V58.6 M618.8 55.2 V58.6 M617.2 56.9 H618.8 M618.8 55.2 L621 56.9 L618.8 58.6" fill="none" stroke="#a8a8a8" stroke-width="0.55" />
<path d="M625 55 L628.4 58.6 M628.4 55 L625 58.6" fill="none" stroke="#a8a8a8" stroke-width="0.6" />
<line x1="504.6" y1="61.6" x2="631.2" y2="61.6" stroke="#d8d8d8" stroke-width="0.6" />
<rect x="504.6" y="62" width="117.8" height="340.4" fill="#f7f7f7" />
<path d="M508.8 67.6 H510.4 M508.8 70.6 H510.4 M508.8 73.6 H510.4" fill="none" stroke="#2a9a3a" stroke-width="0.9" />
<path d="M510.8 67.4 H516 M510.8 69.3 H516 M510.8 70.6 H516 M510.8 72.4 H516 M510.8 73.8 H516" fill="none" stroke="#7e8ebc" stroke-width="0.6" />
<path d="M512.8 66.8 L512 74.4 M514.8 66.8 L514 74.4" fill="none" stroke="#9aa8cc" stroke-width="0.5" />
<rect x="520.2" y="65.2" width="10.6" height="10.8" fill="#fdfdfd" stroke="#c0c0c0" stroke-width="0.7" />
<path d="M522.2 67.4 H526 M522.2 69 H527.4 M522.4 70.6 H527.6 M523 72.2 H528 M523.6 73.8 H528 M522.4 67.2 L523.8 74 M527.8 69.6 L527.8 74" fill="none" stroke="#7e8ebc" stroke-width="0.6" />
<path d="M529 67.6 L525.4 71.4" fill="none" stroke="#14143a" stroke-width="1.1" />
<path d="M528.3 66.9 L529.7 68.3" fill="none" stroke="#14143a" stroke-width="1.1" />
<path d="M524.4 72.4 L525.6 71 L524.2 71.2 Z" fill="#666" />
<path d="M535 67.6 H540 M535 69.3 H541 M535 70.8 H541 M535 72.4 H541 M535 73.8 H540 M536.8 66.8 L536.4 74.4 M538.8 66.8 L538.4 74.4" fill="none" stroke="#7e8ebc" stroke-width="0.6" />
<rect x="538.8" y="66.8" width="3.2" height="1.8" fill="#2a2a58" />
<path d="M534.6 66.6 v2" fill="none" stroke="#4a4a6a" stroke-width="0.5" />
<path d="M542.6 72.8 V75.2 H540.2 Z" fill="#111" />
<text x="550.4" y="69.3" font-size="5.8" fill="#4a4a4a" textLength="20.8" lengthAdjust="spacingAndGlyphs" >Página 1</text>
<text x="550.4" y="76.2" font-size="5.8" fill="#4a4a4a" textLength="16.6" lengthAdjust="spacingAndGlyphs" >Capa 1</text>
<path d="M612.6 66.1 L614.8 68 L612.6 69.9 Z" fill="#111" />
<rect x="507.6" y="79.4" width="111.1" height="306" fill="#ffffff" stroke="#a8a8a8" stroke-width="0.7" />
<line x1="507.6" y1="79.4" x2="507.6" y2="385.4" stroke="#868686" stroke-width="0.7" />
<rect x="508" y="79.7" width="110.3" height="7.6" fill="#d7e4f5" />
<rect x="508" y="104.4" width="110.3" height="8" fill="#d7e4f5" />
<line x1="507.6" y1="79.5" x2="618.7" y2="79.5" stroke="#6a6a6a" stroke-width="0.7" />
<line x1="507.6" y1="87.4" x2="618.7" y2="87.4" stroke="#9aaccc" stroke-width="0.5" />
<line x1="508" y1="95.8" x2="618.3" y2="95.8" stroke="#dadada" stroke-width="0.5" />
<line x1="508" y1="104.1" x2="618.3" y2="104.1" stroke="#dadada" stroke-width="0.5" />
<line x1="508" y1="112.4" x2="618.3" y2="112.4" stroke="#dadada" stroke-width="0.5" />
<line x1="508" y1="120.9" x2="618.3" y2="120.9" stroke="#dadada" stroke-width="0.5" />
<line x1="508" y1="129.3" x2="618.3" y2="129.3" stroke="#dadada" stroke-width="0.5" />
<rect x="511.2" y="81.7" width="3.8" height="3.8" fill="#ffffff" stroke="#5a5a8a" stroke-width="0.6" />
<path d="M512.2 83.6 H514" fill="none" stroke="#333" stroke-width="0.5" />
<path d="M519.2 80.9 H522.6 L523.9 82.2 V86.3 H519.2 Z" fill="#eaf4ee" stroke="#7a9a8a" stroke-width="0.6" />
<text x="526.4" y="85.8" font-size="5.9" fill="#1a1a3a" textLength="21.2" lengthAdjust="spacingAndGlyphs" font-weight="bold" >Página 1</text>
<rect x="511.2" y="106.4" width="3.8" height="3.8" fill="#ffffff" stroke="#5a5a8a" stroke-width="0.6" />
<path d="M512.2 108.3 H514" fill="none" stroke="#333" stroke-width="0.5" />
<path d="M519.2 105.6 H522.6 L523.9 106.9 V111 H519.2 Z" fill="#eaf4ee" stroke="#7a9a8a" stroke-width="0.6" />
<text x="526.4" y="110.5" font-size="5.9" fill="#1a1a3a" textLength="39.4" lengthAdjust="spacingAndGlyphs" font-weight="bold" >Página maestra</text>
<path d="M527.8 91.6 Q530.2 89.3 532.6 91.6 Q530.2 93.7 527.8 91.6 Z" fill="#f0f0f0" stroke="#333" stroke-width="0.5" />
<circle cx="530.2" cy="91.6" r="1" fill="#222" />
<circle cx="537.6" cy="91.6" r="2.1" fill="#f8e8e8" stroke="#c02020" stroke-width="0.7" />
<path d="M536.2 90.2 L539 93" fill="none" stroke="#c02020" stroke-width="0.7" />
<path d="M542.5 93.4 L546.1 89.8" fill="none" stroke="#1c1c30" stroke-width="1.6" />
<path d="M543.3 92 L545.7 89.6" fill="none" stroke="#8a9ac8" stroke-width="0.45" />
<path d="M541.6 94.3 L543.1 93.8 L542.1 92.8 Z" fill="#444" />
<rect x="548" y="88.6" width="7" height="5.9" fill="#0000ff" />
<text x="558.4" y="93.8" font-size="6" fill="#7a7a7a" textLength="13.2" lengthAdjust="spacingAndGlyphs" font-style="italic" >Guías</text>
<path d="M527.8 100.1 Q530.2 97.8 532.6 100.1 Q530.2 102.2 527.8 100.1 Z" fill="#f0f0f0" stroke="#333" stroke-width="0.5" />
<circle cx="530.2" cy="100.1" r="1" fill="#222" />
<rect x="535.1" y="99.8" width="5" height="2.3" fill="#e4e4e4" stroke="#6c6c6c" stroke-width="0.5" />
<rect x="536.2" y="98" width="2.8" height="1.9" fill="#fdfdfd" stroke="#8a8a8a" stroke-width="0.45" />
<path d="M536.1 101.3 H539.1" fill="none" stroke="#fff" stroke-width="0.6" />
<path d="M542.5 101.9 L546.1 98.3" fill="none" stroke="#1c1c30" stroke-width="1.6" />
<path d="M543.3 100.5 L545.7 98.1" fill="none" stroke="#8a9ac8" stroke-width="0.45" />
<path d="M541.6 102.8 L543.1 102.3 L542.1 101.3 Z" fill="#444" />
<rect x="548" y="97.1" width="7" height="5.9" fill="#111111" />
<text x="558.4" y="102.3" font-size="6" fill="#e81010" textLength="16.2" lengthAdjust="spacingAndGlyphs" font-weight="bold" >Capa 1</text>
<clipPath id="treeclip"><rect x="507.6" y="79" width="110.5" height="310"/></clipPath>
<g clip-path="url(#treeclip)">
<path d="M527.8 116.7 Q530.2 114.4 532.6 116.7 Q530.2 118.8 527.8 116.7 Z" fill="#f0f0f0" stroke="#333" stroke-width="0.5" />
<circle cx="530.2" cy="116.7" r="1" fill="#222" />
<circle cx="537.6" cy="116.7" r="2.1" fill="#f8e8e8" stroke="#c02020" stroke-width="0.7" />
<path d="M536.2 115.3 L539 118.1" fill="none" stroke="#c02020" stroke-width="0.7" />
<path d="M542.5 118.5 L546.1 114.9" fill="none" stroke="#1c1c30" stroke-width="1.6" />
<path d="M543.3 117.1 L545.7 114.7" fill="none" stroke="#8a9ac8" stroke-width="0.45" />
<path d="M541.6 119.4 L543.1 118.9 L542.1 117.9 Z" fill="#444" />
<rect x="548" y="113.7" width="7" height="5.9" fill="#0000ff" />
<text x="558.4" y="118.9" font-size="6" fill="#4a5ab0" textLength="63.2" lengthAdjust="spacingAndGlyphs" font-style="italic" >Guías (todas las páginas)</text>
<path d="M527.8 125.2 Q530.2 122.9 532.6 125.2 Q530.2 127.3 527.8 125.2 Z" fill="#f0f0f0" stroke="#333" stroke-width="0.5" />
<circle cx="530.2" cy="125.2" r="1" fill="#222" />
<circle cx="537.6" cy="125.2" r="2.1" fill="#f8e8e8" stroke="#c02020" stroke-width="0.7" />
<path d="M536.2 123.8 L539 126.6" fill="none" stroke="#c02020" stroke-width="0.7" />
<path d="M542.5 127 L546.1 123.4" fill="none" stroke="#1c1c30" stroke-width="1.6" />
<path d="M543.3 125.6 L545.7 123.2" fill="none" stroke="#8a9ac8" stroke-width="0.45" />
<path d="M541.6 127.9 L543.1 127.4 L542.1 126.4 Z" fill="#444" />
<rect x="548" y="122.2" width="7" height="5.9" fill="#111111" />
<text x="558.4" y="127.4" font-size="6" fill="#4a5ab0" textLength="21.6" lengthAdjust="spacingAndGlyphs" font-style="italic" >Escritorio</text>
<path d="M527.8 133.6 Q530.2 131.3 532.6 133.6 Q530.2 135.7 527.8 133.6 Z" fill="#d8d8d8" stroke="#777" stroke-width="0.5" />
<circle cx="537.6" cy="133.6" r="2.1" fill="#f8e8e8" stroke="#c02020" stroke-width="0.7" />
<path d="M536.2 132.2 L539 135" fill="none" stroke="#c02020" stroke-width="0.7" />
<path d="M542.5 135.4 L546.1 131.8" fill="none" stroke="#1c1c30" stroke-width="1.6" />
<path d="M543.3 134 L545.7 131.6" fill="none" stroke="#8a9ac8" stroke-width="0.45" />
<path d="M541.6 136.3 L543.1 135.8 L542.1 134.8 Z" fill="#444" />
<circle cx="544.6" cy="133.8" r="2" fill="none" stroke="#c02020" stroke-width="0.7" />
<rect x="548" y="130.6" width="7" height="5.9" fill="#c4c4c4" />
<text x="558.4" y="135.8" font-size="6" fill="#4a5ab0" textLength="63" lengthAdjust="spacingAndGlyphs" font-style="italic" >Cuadrícula de documento</text>
</g>
<path d="M509 390.2 H514 M509.4 391.7 H514.6 M509.4 393.2 H514.6 M509.8 394.7 H515 M510.2 396.2 H515" fill="none" stroke="#6a7ab0" stroke-width="0.6" />
<path d="M509.2 390 L510.4 396.4 M514.8 391.6 V396.4" fill="none" stroke="#6a7ab0" stroke-width="0.5" />
<circle cx="514.6" cy="391.8" r="1.35" fill="#18a030" />
<path d="M521.8 390.2 H526.8 M522.2 391.7 H527.4 M522.2 393.2 H527.4 M522.6 394.7 H527.8 M523 396.2 H527.8" fill="none" stroke="#6a7ab0" stroke-width="0.6" />
<path d="M522 390 L523.2 396.4 M527.6 391.6 V396.4" fill="none" stroke="#6a7ab0" stroke-width="0.5" />
<circle cx="525.4" cy="393.6" r="1" fill="#e8801a" />
<circle cx="527.4" cy="391.8" r="1.35" fill="#18a030" />
<path d="M534.8 390.2 H539.8 M535.2 391.7 H540.4 M535.2 393.2 H540.4 M535.6 394.7 H540.8 M536 396.2 H540.8" fill="none" stroke="#6a7ab0" stroke-width="0.6" />
<path d="M535 390 L536.2 396.4 M540.6 391.6 V396.4" fill="none" stroke="#6a7ab0" stroke-width="0.5" />
<circle cx="538.4" cy="393.6" r="1" fill="#e8801a" />
<circle cx="540.4" cy="391.8" r="1.35" fill="#18a030" />
<path d="M548 390.2 H553 M548.4 391.7 H553.6 M548.4 393.2 H553.6 M548.8 394.7 H554 M549.2 396.2 H554" fill="none" stroke="#cdcdcd" stroke-width="0.6" />
<path d="M548.2 390 L549.4 396.4 M553.8 391.6 V396.4" fill="none" stroke="#cdcdcd" stroke-width="0.5" />
<path d="M608.8 391.2 H612.6 M609.8 390.4 H611.6 M609.2 391.8 L609.5 396.4 H611.9 L612.2 391.8 Z" fill="#e4e4e4" stroke="#c0c0c0" stroke-width="0.6" />
<rect x="622.4" y="62" width="8.8" height="340.4" fill="#e8e8e8" />
<line x1="622.3" y1="62" x2="622.3" y2="402.4" stroke="#d4d4d4" stroke-width="0.6" />
<line x1="631.3" y1="52" x2="631.3" y2="402.4" stroke="#d4d4d4" stroke-width="0.6" />
<rect x="622.6" y="186.2" width="8.4" height="69.8" fill="#b2b2b2" />
<line x1="622.6" y1="110.6" x2="631" y2="110.6" stroke="#f6f6f6" stroke-width="0.8" />
<line x1="622.6" y1="185.8" x2="631" y2="185.8" stroke="#f6f6f6" stroke-width="0.8" />
<rect x="623.8" y="64.2" width="3" height="3.8" fill="#dfe3f0" stroke="#4a4a7a" stroke-width="0.5" />
<text x="627" y="67.4" font-size="5" fill="#3a3a7a" font-weight="bold" >?</text>
<text transform="translate(624.5 72.7) rotate(90)" font-size="6.4" fill="#5a5a5a" textLength="28.4" lengthAdjust="spacingAndGlyphs">Sugerencias</text>
<path d="M624 113.4 H628.4 V118 H624 Z" fill="#e4e8f4" stroke="#5a5a8a" stroke-width="0.5" />
<path d="M627 112.6 L629.6 112.6 L629.6 118.6" fill="none" stroke="#e09020" stroke-width="0.6" />
<text transform="translate(624.5 121.8) rotate(90)" font-size="6.4" fill="#5a5a5a" textLength="55" lengthAdjust="spacingAndGlyphs">Propiedades de objeto</text>
<path d="M624.4 189.6 H626 M624.4 191.6 H626 M624.4 193.6 H626" fill="none" stroke="#2a8a3a" stroke-width="0.8" />
<path d="M626.6 189.6 H629.6 M626.6 191.6 H629.6 M626.6 193.6 H629.6" fill="none" stroke="#555" stroke-width="0.5" />
<text transform="translate(624.5 197.4) rotate(90)" font-size="6.4" fill="#2a2a2a" textLength="43.3" lengthAdjust="spacingAndGlyphs">Administrador de...</text>
<circle cx="626.8" cy="267.6" r="3.2" fill="#f0f0f0" stroke="#c2c2c2" stroke-width="0.7" />
<path d="M624.6 267.6 H629 M626.8 265.4 V269.8" fill="none" stroke="#c2c2c2" stroke-width="0.7" />
</g>
<g id="palette" >
<rect x="631.6" y="52" width="8.4" height="350.4" fill="#f3f3f3" />
<path d="M633.4 54.6 h0.7 M635.4 54.6 h0.7 M637.4 54.6 h0.7" fill="none" stroke="#9a9a9a" stroke-width="0.6" />
<path d="M636 57 L638.4 58.7 L636 60.4 Z" fill="#111" />
<path d="M633.6 68.6 L636.6 65.2" fill="none" stroke="#c2c2c2" stroke-width="0.8" />
<path d="M636.2 64.2 L638 66" fill="none" stroke="#c2c2c2" stroke-width="1.2" />
<path d="M633.8 73.8 L635.4 72.4 L637 73.8" fill="none" stroke="#bdbdbd" stroke-width="0.6" />
<rect x="632" y="77.4" width="8" height="7.2" fill="#ffffff" stroke="#b4b4b4" stroke-width="0.5" />
<path d="M632.8 78.2 L639.4 83.8 M639.4 78.2 L632.8 83.8" fill="none" stroke="#666" stroke-width="0.45" />
<rect x="632" y="84.6" width="8" height="7.96" fill="#1c1c1c" />
<rect x="632" y="92.51" width="8" height="7.96" fill="#303030" />
<rect x="632" y="100.42" width="8" height="7.96" fill="#464646" />
<rect x="632" y="108.33" width="8" height="7.96" fill="#5b5b5b" />
<rect x="632" y="116.24" width="8" height="7.96" fill="#707070" />
<rect x="632" y="124.15" width="8" height="7.96" fill="#868686" />
<rect x="632" y="132.06" width="8" height="7.96" fill="#9c9c9c" />
<rect x="632" y="139.97" width="8" height="7.96" fill="#b3b3b3" />
<rect x="632" y="147.88" width="8" height="7.96" fill="#cacaca" />
<rect x="632" y="155.79" width="8" height="7.96" fill="#e4e4e4" />
<rect x="632" y="163.7" width="8" height="7.96" fill="#ffffff" />
<rect x="632" y="171.61" width="8" height="7.96" fill="#3b2f98" />
<rect x="632" y="179.52" width="8" height="7.96" fill="#1aa0dc" />
<rect x="632" y="187.43" width="8" height="7.96" fill="#1fa455" />
<rect x="632" y="195.34" width="8" height="7.96" fill="#fde01a" />
<rect x="632" y="203.25" width="8" height="7.96" fill="#e03a28" />
<rect x="632" y="211.16" width="8" height="7.96" fill="#e7128c" />
<rect x="632" y="219.07" width="8" height="7.96" fill="#a3559c" />
<rect x="632" y="226.98" width="8" height="7.96" fill="#f7891b" />
<rect x="632" y="234.89" width="8" height="7.96" fill="#fbbcbc" />
<rect x="632" y="242.8" width="8" height="7.96" fill="#7a655c" />
<rect x="632" y="250.71" width="8" height="7.96" fill="#dcd8f8" />
<rect x="632" y="258.62" width="8" height="7.96" fill="#a9a0e0" />
<rect x="632" y="266.53" width="8" height="7.96" fill="#7494d6" />
<rect x="632" y="274.44" width="8" height="7.96" fill="#7f6ac8" />
<rect x="632" y="282.35" width="8" height="7.96" fill="#9790bb" />
<rect x="632" y="290.26" width="8" height="7.96" fill="#4b679f" />
<rect x="632" y="298.17" width="8" height="7.96" fill="#555478" />
<rect x="632" y="306.08" width="8" height="7.96" fill="#728aac" />
<rect x="632" y="313.99" width="8" height="7.96" fill="#0093d5" />
<rect x="632" y="321.9" width="8" height="7.96" fill="#b2dff6" />
<rect x="632" y="329.81" width="8" height="7.96" fill="#b5cbdc" />
<rect x="632" y="337.72" width="8" height="7.96" fill="#8fa5af" />
<rect x="632" y="345.63" width="8" height="7.96" fill="#6b7b84" />
<rect x="632" y="353.54" width="8" height="7.96" fill="#3f4b50" />
<rect x="632" y="361.45" width="8" height="7.96" fill="#55747a" />
<rect x="632" y="369.36" width="8" height="7.96" fill="#4b8e7e" />
<rect x="632" y="377.27" width="8" height="6.58" fill="#6f9e9b" />
<line x1="631.8" y1="77.4" x2="631.8" y2="383.8" stroke="#8a8a8a" stroke-width="0.5" />
<path d="M634 387.4 L635.6 389 L637.2 387.4" fill="none" stroke="#555" stroke-width="0.6" />
<path d="M634.2 394.6 H637 M634.2 396 H637" fill="none" stroke="#b0b0b0" stroke-width="0.5" />
</g>
<g id="navigator" >
<rect x="22.6" y="385.4" width="480.2" height="7.8" fill="#f3f3f3" />
<line x1="22.6" y1="385.5" x2="263.6" y2="385.5" stroke="#a0a0a0" stroke-width="0.6" />
<line x1="263.6" y1="385.4" x2="263.6" y2="393.2" stroke="#b0b0b0" stroke-width="0.6" />
<path d="M24.1 386.5 H26.7 L28 387.8 V392.3 H24.1 Z" fill="#ffffff" stroke="#333" stroke-width="0.6" />
<path d="M25.2 390 H26.8" fill="none" stroke="#333" stroke-width="0.5" />
<path d="M32.4 387.6 V391.2 M35.4 387.6 L33.2 389.4 L35.4 391.2 Z" fill="#333" stroke="#333" stroke-width="0.5" />
<path d="M43.6 387.6 L41.4 389.4 L43.6 391.2 Z" fill="#333" />
<text x="53.8" y="391.6" font-size="6.2" fill="#4a4a4a" textLength="13.6" lengthAdjust="spacingAndGlyphs" >1 de 1</text>
<path d="M78.2 387.6 L80.4 389.4 L78.2 391.2 Z" fill="#333" />
<path d="M88.2 387.6 V391.2 M85.2 387.6 L87.4 389.4 L85.2 391.2 Z" fill="#333" stroke="#333" stroke-width="0.5" />
<path d="M93.1 386.5 H95.7 L97 387.8 V392.3 H93.1 Z" fill="#ffffff" stroke="#333" stroke-width="0.6" />
<path d="M94.2 390 H95.8" fill="none" stroke="#333" stroke-width="0.5" />
<path d="M99.8 385.4 H131.4 L134.6 393.2 H99.8 Z" fill="#ffffff" stroke="#b4b4b4" stroke-width="0.5" />
<text x="106.8" y="391.5" font-size="6.1" fill="#4a4a4a" textLength="20.6" lengthAdjust="spacingAndGlyphs" >Página 1</text>
<path d="M261.2 387.4 v0.6 M261.2 388.9 v0.6 M261.2 390.4 v0.6" fill="none" stroke="#9a9a9a" stroke-width="0.6" />
<rect x="264" y="385.8" width="230.6" height="7.2" fill="#f4f4f4" />
<path d="M267.8 387.8 L266.2 389.3 L267.8 390.8" fill="none" stroke="#222" stroke-width="0.8" />
<rect x="271.3" y="386.1" width="214.3" height="6.2" fill="#c9c9c9" />
<path d="M490 387.8 L491.6 389.3 L490 390.8" fill="none" stroke="#333" stroke-width="0.8" />
<circle cx="497.8" cy="388.8" r="1.7" fill="#eef2fa" stroke="#555" stroke-width="0.5" />
<path d="M499 390 L500.8 391.8" fill="none" stroke="#444" stroke-width="0.8" />
</g>
<g id="docpalette" >
<rect x="13.8" y="393.4" width="489" height="8.8" fill="#f7f7f7" />
<path d="M17.2 395.4 v0.6 M17.2 397 v0.6 M17.2 398.6 v0.6" fill="none" stroke="#8a8a8a" stroke-width="0.6" />
<path d="M19.4 396 L22 397.9 L19.4 399.8 Z" fill="#111" />
<path d="M25.8 400.6 L29.4 396.4" fill="none" stroke="#223" stroke-width="1.2" />
<path d="M28.6 395.4 L30.4 397.2" fill="none" stroke="#223" stroke-width="1.4" />
<path d="M35 396.4 L33.6 397.9 L35 399.4" fill="none" stroke="#c8c8c8" stroke-width="0.6" />
<rect x="38.6" y="393.8" width="8.2" height="8.1" fill="#ffffff" stroke="#7a7a7a" stroke-width="0.6" />
<path d="M39.4 394.6 L46 401.1 M46 394.6 L39.4 401.1" fill="none" stroke="#6a6a6a" stroke-width="0.5" />
<text x="158.4" y="399.8" font-size="5.1" fill="#ababab" textLength="222" lengthAdjust="spacingAndGlyphs" font-style="italic" >Arrastre los colores (o los objetos) hasta aquí para almacenar estos colores con el documento</text>
<path d="M487.4 396.4 L489 397.9 L487.4 399.4" fill="none" stroke="#c8c8c8" stroke-width="0.6" />
<path d="M495 396.6 L496.3 397.9 L495 399.2 M496.8 396.6 L498.1 397.9 L496.8 399.2" fill="none" stroke="#c8c8c8" stroke-width="0.5" />
</g>
<g id="statusbar" >
<rect x="0" y="402.4" width="640" height="15.6" fill="#f2f2f2" />
<line x1="0" y1="402.4" x2="640" y2="402.4" stroke="#dcdcdc" stroke-width="0.7" />
<text x="2.6" y="412.7" font-size="6.3" fill="#4a4a4a" textLength="42" lengthAdjust="spacingAndGlyphs" >( 80,049; 215,676 )</text>
<rect x="49" y="407" width="6.6" height="6.6" fill="#fbfbfb" stroke="#8a8a8a" stroke-width="0.6" />
<path d="M51.4 408.6 L53.8 410.3 L51.4 412 Z" fill="#111" />
<rect x="429.8" y="407" width="6" height="6.6" fill="#9aa8d0" stroke="#7080b0" stroke-width="0.5" />
<rect x="429.8" y="407" width="6" height="1.2" fill="#c04050" />
<circle cx="432.8" cy="410.8" r="1.7" fill="#e8ecf6" />
<path d="M432.8 409.8 V410.8 H433.8" fill="none" stroke="#7080b0" stroke-width="0.5" />
<path d="M442.6 410.4 L445.8 407.2 L449 410.4 L445.8 413.4 Z" fill="#fafafa" stroke="#33333f" stroke-width="0.65" />
<path d="M443 411 L448.6 411 L445.8 413.6 Z" fill="#e05a10" />
<path d="M449.4 411.4 Q450.4 413 449.6 413.6" fill="none" stroke="#e05a10" stroke-width="0.7" />
<rect x="452.4" y="406.2" width="8" height="8" fill="#ffffff" stroke="#7a7a7a" stroke-width="0.6" />
<path d="M453.2 407 L459.6 413.4 M459.6 407 L453.2 413.4" fill="none" stroke="#6a6a6a" stroke-width="0.5" />
<text x="462.4" y="412.7" font-size="6.3" fill="#444" textLength="20.6" lengthAdjust="spacingAndGlyphs" >Ninguna</text>
<line x1="537.4" y1="405" x2="537.4" y2="416" stroke="#dcdcdc" stroke-width="0.6" />
<path d="M543.2 406.6 L545 410.6 L544.4 412.6 H542 L541.4 410.6 Z" fill="#fafafa" stroke="#2a2a3a" stroke-width="0.6" />
<path d="M543.2 407.4 V410.4" fill="none" stroke="#2a2a3a" stroke-width="0.5" />
<circle cx="543.2" cy="410.8" r="0.5" fill="#2a2a3a" />
<path d="M541.4 413.7 H545" fill="none" stroke="#2a2a3a" stroke-width="0.8" />
<rect x="549.7" y="405.9" width="7.9" height="7.9" fill="#141414" />
<text x="559.4" y="412.7" font-size="6.3" fill="#3a3a3a" textLength="41.4" lengthAdjust="spacingAndGlyphs" >C:0 M:0 Y:0 K:100</text>
<text x="604" y="412.7" font-size="6.3" fill="#3a3a3a" textLength="24" lengthAdjust="spacingAndGlyphs" >0,200 mm</text>
</g>
</svg>
</body>
</html>
